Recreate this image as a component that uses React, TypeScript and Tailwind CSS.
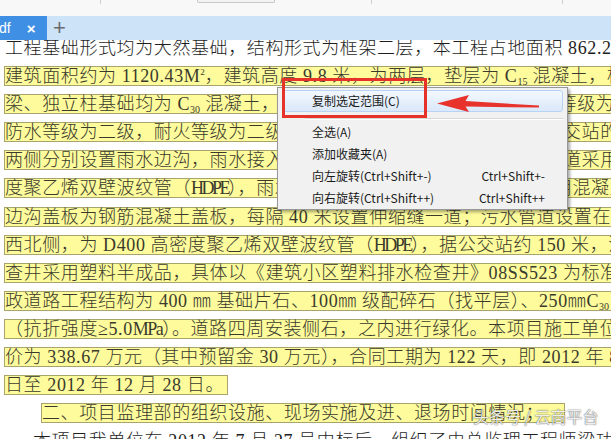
import React from "react";

const Sub = ({ c }: { c: string }) => (
  <span className="text-[10px] leading-none tracking-normal align-[-3px]">{c}</span>
);
const Sup = ({ c }: { c: string }) => (
  <span className="text-[9px] leading-none tracking-normal align-[7px]">{c}</span>
);
const Nar = ({ c }: { c: string }) => <span className="tracking-[-2.5px]">{c}</span>;

const Row = ({
  children,
  pl = "pl-[4px]",
  pr = "pr-[3px]",
}: {
  children: React.ReactNode;
  pl?: string;
  pr?: string;
}) => (
  <div className={"flex h-[28.1px] " + pl}>
    <span
      className={
        "block h-[20px] shrink-0 whitespace-nowrap border border-[#a9a46c] bg-[#fdfb9c] leading-[18px] text-[#3a3a2c] " +
        pr
      }
    >
      {children}
    </span>
  </div>
);

export default function App() {
  return (
    <div className="relative h-[439px] w-[611px] overflow-hidden bg-white">
      {/* top toolbar remnant */}
      <div className="relative flex h-[16px] bg-[#f8f8f8]">
        <div className="w-[100px]" />
        <div className="h-[4px] w-px bg-[#cfcfcf]" />
        <div className="w-[96px]" />
        <div className="h-[3px] w-[78px] rounded-b-[2px] border-x border-b border-[#c8c8c8] bg-[#f3f3f3]" />
        <div className="w-[96px]" />
        <div className="h-[4px] w-px bg-[#cfcfcf]" />
        <div className="w-[190px]" />
        <div className="h-[4px] w-px bg-[#cfcfcf]" />
      </div>
      {/* tab bar */}
      <div className="relative z-10 flex h-[24px] items-center bg-[#cde3f8] font-['Liberation_Sans',sans-serif]">
        <div className="flex h-full w-[47px] items-center bg-[#3f8fe5] text-white">
          <span className="-ml-px text-[14px] leading-none">df</span>
          <span className="ml-[16px] text-[15px] font-bold leading-none">×</span>
        </div>
        <span className="ml-[6px] text-[22px] font-light leading-none text-[#6b6b6b]">+</span>
      </div>

      {/* document */}
      <div className="relative z-0 -mt-[2px] font-['Liberation_Serif','Noto_Sans_CJK_SC',serif] text-[18px] font-light tracking-[0.6px]">
        <div className="h-[28.1px] whitespace-nowrap pl-[5px] leading-[20px] text-[#1e1e1e]">
          工程基础形式均为大然基础，结构形式为框架二层，本工程占地面积 862.25 平方米，
        </div>
        <Row>
          建筑面积约为 1120.43M<Sup c="2" />，建筑高度 9.8 米，为两层，垫层为 C<Sub c="15" /> 混凝土，框架柱
        </Row>
        <Row>
          梁、独立柱基础均为 C<Sub c="30" /> 混凝土，屋面采用现浇钢筋混凝土板，抗震等级为六度，
        </Row>
        <Row>防水等级为二级，耐火等级为二级。本工程北侧为城市道路，东临公交站的北侧</Row>
        <Row>两侧分别设置雨水边沟，雨水接入雨水管网，污水接入市政污水主管道采用高密</Row>
        <Row>
          度聚乙烯双壁波纹管（<Nar c="HDPE" />），雨水排入市政雨水管网，道路面层采用混凝土，
        </Row>
        <Row>边沟盖板为钢筋混凝土盖板，每隔 40 米设置伸缩缝一道；污水管道设置在公交站</Row>
        <Row>
          西北侧，为 D400 高密度聚乙烯双壁波纹管（<Nar c="HDPE" />），据公交站约 150 米，污水
        </Row>
        <Row>查井采用塑料半成品，具体以《建筑小区塑料排水检查井》08SS523 为标准图</Row>
        <Row>
          政道路工程结构为 400 ㎜ 基础片石、100㎜ 级配碎石（找平层）、250㎜C<Sub c="30" /> 混凝
        </Row>
        <Row>
          （抗折强度≥5.0<span className="tracking-[-1.5px]">MPa</span>）。道路四周安装侧石，之内进行绿化。本项目施工单位
        </Row>
        <Row>价为 338.67 万元（其中预留金 30 万元），合同工期为 122 天，即 2012 年 8 月</Row>
        <Row>日至 2012 年 12 月 28 日。</Row>
        <Row pl="pl-[41px]" pr="pr-[20px]">
          二、项目监理部的组织设施、现场实施及进、退场时间情况；
        </Row>
        <div className="h-[28.1px] whitespace-nowrap pl-[33px] leading-[20px] text-[#1e1e1e]">
          本项目我单位在 2012 年 7 月 27 号中标后，组织了由总监理工程师梁功孙等人
        </div>
      </div>

      {/* context menu */}
      <div className="absolute left-[277px] top-[87px] w-[291px] border border-[#979797] bg-[#f1f1f1] px-[4px] pt-[2px] font-['Noto_Sans_CJK_SC',sans-serif] text-[12px] text-[#1a1a1a] shadow-[2px_2px_3px_rgba(0,0,0,0.35)]">
        <div className="flex h-[22px] items-center rounded-[3px] border border-[#b8d3f4] bg-linear-to-b from-[#f3f8fe] to-[#dae8f9] pl-[29px]">
          复制选定范围(C)
        </div>
        <div className="h-[9px] pl-[23px] pt-[6px]">
          <div className="h-px bg-[#d6d6d6]" />
          <div className="h-px bg-white" />
        </div>
        <div className="flex h-[22px] items-center pl-[30px]">全选(A)</div>
        <div className="flex h-[22px] items-center pl-[30px]">添加收藏夹(A)</div>
        <div className="flex h-[22px] items-center justify-between pl-[30px] pr-[18px]">
          <span>向左旋转(Ctrl+Shift+-)</span>
          <span>Ctrl+Shift+-</span>
        </div>
        <div className="flex h-[22px] items-center justify-between pl-[30px] pr-[18px]">
          <span>向右旋转(Ctrl+Shift++)</span>
          <span>Ctrl+Shift++</span>
        </div>
      </div>

      {/* red annotation box */}
      <div className="absolute left-[282px] top-[78px] h-[40px] w-[145px] border-[3px] border-[#e5332a]" />

      {/* red arrow */}
      <svg className="pointer-events-none absolute left-0 top-0" width="611" height="439" viewBox="0 0 611 439">
        <polygon
          points="437,103.5 469,95 465.5,101 539,105.6 539,107.6 465.5,106.5 469,112"
          fill="#e8322c"
        />
      </svg>

      {/* watermark */}
      <div className="absolute left-[473px] top-[406px] whitespace-nowrap font-['Noto_Sans_CJK_SC',sans-serif] text-[16px] leading-[20px] text-white/90 [text-shadow:0_0_1px_rgba(0,0,0,0.7),0_0_2px_rgba(0,0,0,0.35)]">
        头条号 / 云商平台
      </div>
    </div>
  );
}
